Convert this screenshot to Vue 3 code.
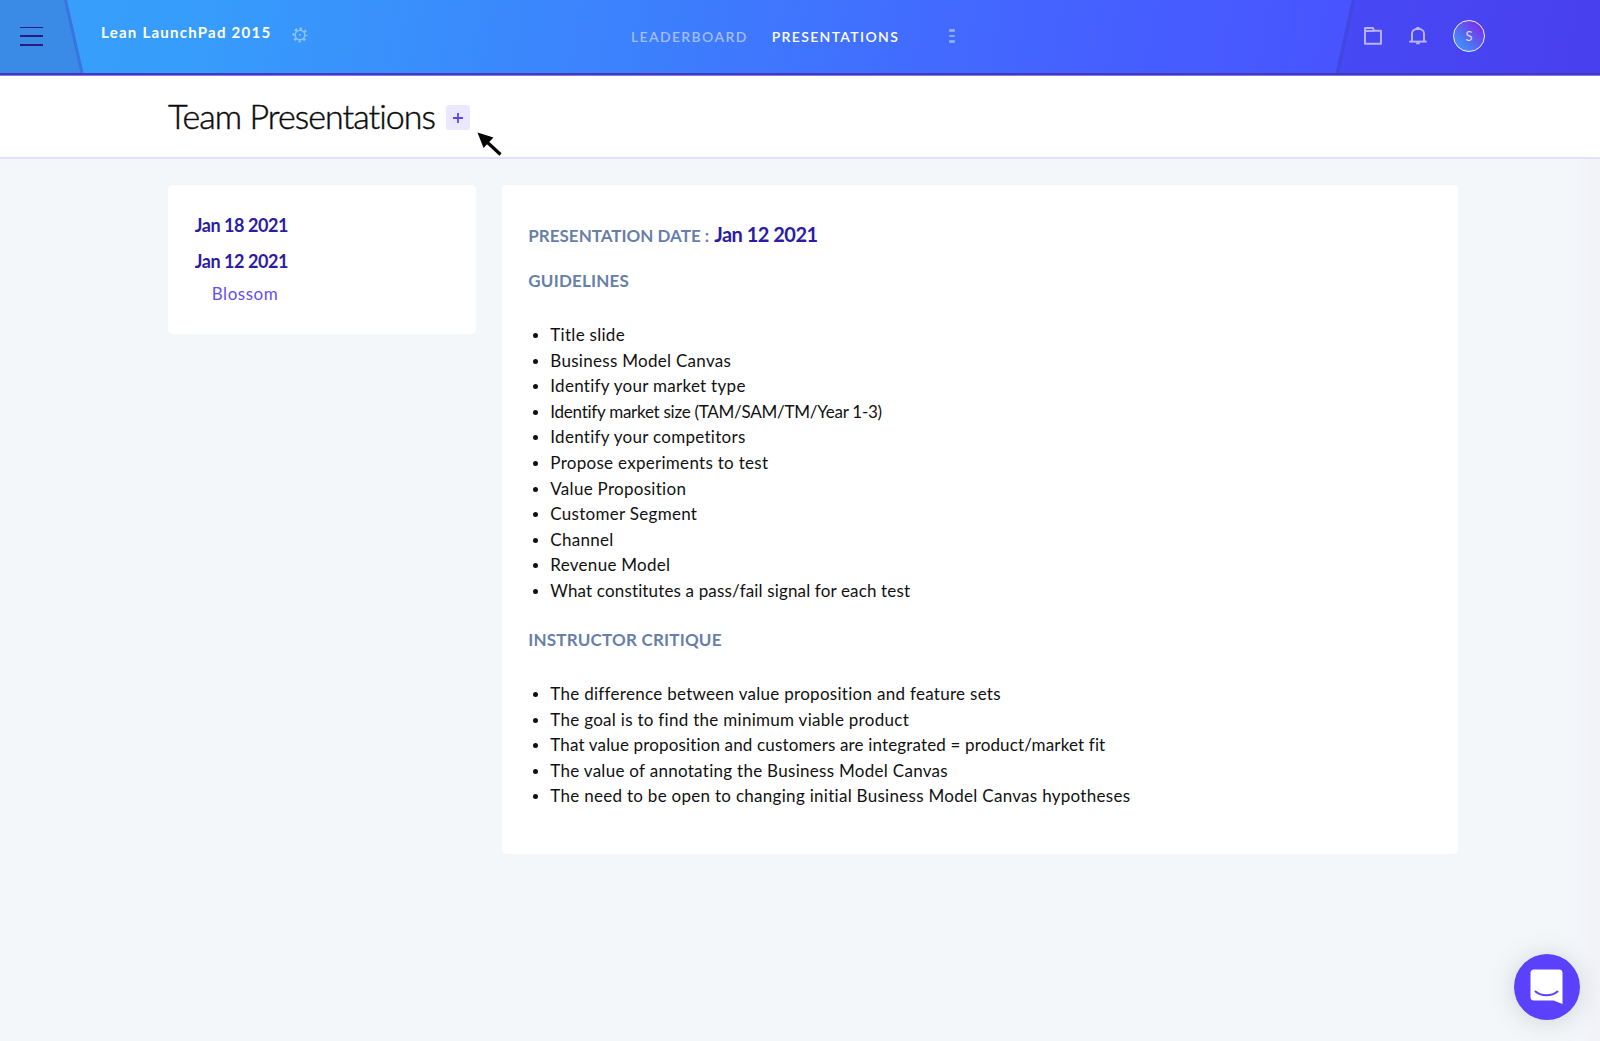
<template>
    <div class="page">
        <header class="topbar">
            <svg class="topbar__shapes" viewBox="0 0 1600 73" preserveAspectRatio="none">
                <polygon points="0,0 65,0 82,73 0,73" fill="#3c84de" fill-opacity="0.75" />
                <path d="M65.5 0L82 73" stroke="#3a74dd" stroke-width="3" />
                <polygon points="1354,0 1600,0 1600,73 1338,73" fill="#463ce8" fill-opacity="0.45" />
                <path d="M1353.5 0L1337.5 73" stroke="#4048e0" stroke-width="3.5" />
            </svg>
            <button class="topbar__menu" aria-label="Menu">
                <span class="topbar__line"></span>
                <span class="topbar__line"></span>
                <span class="topbar__line topbar__line--bold"></span>
            </button>
            <div class="topbar__course">
                <span class="topbar__name">Lean LaunchPad 2015</span>
                <svg class="topbar__gear" width="16" height="16" viewBox="0 0 16 16" fill="none">
                    <circle cx="8" cy="8" r="4.8" stroke="currentColor" stroke-width="1.5" />
                    <circle cx="8" cy="8" r="6.4" stroke="currentColor" stroke-width="2.2" stroke-dasharray="2.3 2.73" stroke-dashoffset="1.15" />
                    <circle cx="8" cy="8" r="0.9" fill="currentColor" />
                </svg>
            </div>
            <nav class="topbar__nav">
                <a v-for="item in navItems" :key="item.label" class="topbar__link"
                    :class="{ 'topbar__link--active': item.active }">{{ item.label }}</a>
                <span class="topbar__more"><i></i><i></i><i></i></span>
            </nav>
            <div class="topbar__actions">
                <svg width="18" height="18" viewBox="0 0 18 18" fill="none" stroke="currentColor" stroke-width="1.9" stroke-linejoin="round">
                    <path d="M1 16.8V1h8l1 2.8h7v13z" />
                    <path d="M1 4h9" />
                </svg>
                <svg class="topbar__bell" width="18" height="18" viewBox="0 0 18 18" fill="none" stroke="currentColor" stroke-width="1.9">
                    <path d="M3 14.4V6.6a4.6 4.6 0 0 1 4.6-4.6h2.8a4.6 4.6 0 0 1 4.6 4.6v7.8" />
                    <path d="M0.3 14.6h17.4" />
                    <path d="M7.4 1h3.2M7.2 16.2h3.6" />
                </svg>
                <span class="topbar__avatar">S</span>
            </div>
        </header>

        <section class="heading">
            <h1 class="heading__title">Team Presentations</h1>
            <button class="heading__add" aria-label="Add presentation">
                <svg width="10" height="10" viewBox="0 0 10 10" stroke="#5b45f5" stroke-width="1.8">
                    <path d="M5 0v10M0 5h10" />
                </svg>
            </button>
            <svg class="heading__pointer" width="26" height="26" viewBox="0 0 26 26">
                <path d="M10 10L23.5 22.5" stroke="#050505" stroke-width="3.2" />
                <path d="M0.5 0.5L16.5 5.5L6.5 16z" fill="#050505" />
            </svg>
        </section>

        <main class="content">
            <aside class="card dates">
                <div v-for="entry in dates" :key="entry.date" class="dates__group">
                    <div class="dates__day">{{ entry.date }}</div>
                    <a v-for="team in entry.teams" :key="team" class="dates__team">{{ team }}</a>
                </div>
            </aside>

            <article class="card detail">
                <h2 class="detail__label detail__label--date">
                    <span class="detail__caption">PRESENTATION DATE :</span>
                    <span class="detail__date">Jan 12 2021</span>
                </h2>
                <template v-for="section in sections" :key="section.title">
                    <h2 class="detail__label">{{ section.title }}</h2>
                    <ul class="detail__list">
                        <li v-for="line in section.lines" :key="line" :class="lineClass(line)">{{ line }}</li>
                    </ul>
                </template>
            </article>
        </main>

        <button class="chat" aria-label="Open chat">
            <svg width="34" height="36" viewBox="0 0 34 36">
                <path d="M4 0.5h25a3.5 3.5 0 0 1 3.5 3.5v31L23.5 31.5H4A3.5 3.5 0 0 1 0.5 28V4A3.5 3.5 0 0 1 4 0.5z" fill="#fff" />
                <path d="M5.5 22.5c6 5 16 5 22 0" fill="none" stroke="#5b41fb" stroke-width="2" stroke-linecap="round" />
            </svg>
        </button>
    </div>
</template>

<script setup>
const navItems = [
    { label: 'LEADERBOARD', active: false },
    { label: 'PRESENTATIONS', active: true }
];

const dates = [
    { date: 'Jan 18 2021', teams: [] },
    { date: 'Jan 12 2021', teams: ['Blossom'] }
];

const sections = [
    {
        title: 'GUIDELINES',
        lines: [
            'Title slide',
            'Business Model Canvas',
            'Identify your market type',
            'Identify market size (TAM/SAM/TM/Year 1-3)',
            'Identify your competitors',
            'Propose experiments to test',
            'Value Proposition',
            'Customer Segment',
            'Channel',
            'Revenue Model',
            'What constitutes a pass/fail signal for each test'
        ]
    },
    {
        title: 'INSTRUCTOR CRITIQUE',
        lines: [
            'The difference between value proposition and feature sets',
            'The goal is to find the minimum viable product',
            'That value proposition and customers are integrated = product/market fit',
            'The value of annotating the Business Model Canvas',
            'The need to be open to changing initial Business Model Canvas hypotheses'
        ]
    }
];

const lineClass = (line) => {
    if (line.includes('(')) return 'detail__line--tight';
    if (line.includes('/')) return 'detail__line--snug';
    return '';
};
</script>

<style>
body {
    margin: 0;
    background-color: #f3f7fa;
}
</style>

<style scoped>
.page {
    position: relative;
    min-height: 1041px;
    overflow: hidden;
    box-sizing: border-box;
    background: linear-gradient(90deg, #f3f7fa 98.6%, #f1f3f8 99.4%);
    color: #111;
    font-family: Lato, "Liberation Sans", sans-serif;
}

button {
    padding: 0;
    border: none;
    cursor: pointer;
}

.topbar {
    position: relative;
    display: grid;
    grid-template-columns: 101px 530px 1fr 236px;
    height: 75px;
    box-sizing: border-box;
    border-bottom: 2px solid #4338c6;
    background: linear-gradient(100deg, #379ffb 0%, #379cfb 13%, #3c80fd 40%, #4464ff 64%, #4854ff 84%, #4a42f2 100%);
}

.topbar__shapes {
    position: absolute;
    inset: 0;
    width: 100%;
    height: 73px;
}

.topbar__menu,
.topbar__course,
.topbar__nav,
.topbar__actions {
    position: relative;
}

.topbar__menu {
    display: flex;
    flex-direction: column;
    gap: 7px;
    align-self: start;
    width: 23px;
    margin: 26.5px 0 0 20px;
    background: none;
}

.topbar__line {
    height: 1.5px;
    background-color: #271c82;
}

.topbar__line--bold {
    height: 2.5px;
}

.topbar__course {
    display: flex;
    align-items: flex-start;
}

.topbar__name {
    width: 191px;
    margin-top: 22px;
    color: #fff;
    font-size: 15px;
    font-weight: 700;
    line-height: 20px;
    letter-spacing: 1.25px;
    white-space: nowrap;
}

.topbar__gear {
    margin-top: 27px;
    color: #8cc4fd;
}

.topbar__nav {
    display: flex;
    align-items: center;
    height: 72px;
}

.topbar__link {
    margin-right: 24px;
    color: #a3bdfd;
    font-size: 14px;
    font-weight: 600;
    letter-spacing: 1.35px;
    white-space: nowrap;
}

.topbar__link--active {
    color: #fff;
}

.topbar__more {
    display: flex;
    flex-direction: column;
    gap: 3px;
    margin-left: 26px;
}

.topbar__more i {
    width: 6px;
    height: 2.6px;
    border-radius: 1px;
    background-color: #8ba9fd;
}

.topbar__actions {
    display: flex;
    align-items: center;
    height: 72px;
    color: #b9b5fa;
}

.topbar__bell {
    margin-left: 27px;
}

.topbar__avatar {
    width: 30px;
    height: 30px;
    margin-left: 26px;
    border: 1.5px solid #f3eeff;
    border-radius: 50%;
    background: linear-gradient(45deg, #3c96fb 12%, #7a2de8 88%);
    color: #dcd8ff;
    font-size: 13px;
    line-height: 31px;
    text-align: center;
}

.heading {
    display: flex;
    align-items: flex-start;
    height: 84px;
    padding-left: 168px;
    box-sizing: border-box;
    border-top: 1px solid #857dda;
    border-bottom: 2px solid #e2e1fb;
    background-color: #fff;
}

.heading__title {
    width: 278px;
    margin: 19px 0 0;
    color: #0b0b0b;
    font-size: 34px;
    font-weight: 300;
    line-height: 42px;
    letter-spacing: -0.95px;
    white-space: nowrap;
    -webkit-text-stroke: 0.45px #0b0b0b;
}

.heading__add {
    display: flex;
    align-items: center;
    justify-content: center;
    width: 24px;
    height: 25px;
    margin-top: 29px;
    border-radius: 3px;
    background-color: #ebe8fe;
}

.heading__pointer {
    margin: 56px 0 0 7px;
}

.content {
    display: grid;
    grid-template-columns: 307.5px 956px;
    gap: 26.5px;
    align-items: start;
    padding: 26px 0 0 168.3px;
}

.card {
    box-sizing: border-box;
    border-radius: 5px;
    background-color: #fff;
}

.dates {
    height: 149px;
    padding: 23px 26.5px;
}

.dates__day {
    color: #2b1ca5;
    font-size: 18px;
    font-weight: 700;
    line-height: 35.5px;
    letter-spacing: -0.45px;
}

.dates__team {
    display: block;
    margin-left: 17px;
    color: #6350f0;
    font-size: 17px;
    line-height: 29px;
    letter-spacing: 0.5px;
}

.detail {
    height: 669px;
    padding: 31px 26px;
}

.detail__label {
    margin: 0;
    color: #687fa9;
    font-size: 17px;
    font-weight: 700;
    line-height: 36px;
    letter-spacing: 0.2px;
    white-space: nowrap;
}

.detail__label--date {
    display: flex;
    align-items: baseline;
    gap: 5px;
    margin-bottom: 9px;
    letter-spacing: 0;
}

.detail__date {
    color: #2b1ca5;
    font-size: 20px;
    letter-spacing: -0.5px;
}

.detail__list {
    margin: 23px 0 18.5px;
    padding-left: 22px;
    font-size: 17px;
    line-height: 25.6px;
    letter-spacing: 0.29px;
    white-space: nowrap;
}

.detail__list li::marker {
    font-size: 15px;
}

.detail__line--snug {
    letter-spacing: 0.15px;
}

.detail__line--tight {
    letter-spacing: -0.26px;
}

.chat {
    position: absolute;
    right: 20px;
    bottom: 21px;
    display: flex;
    align-items: center;
    justify-content: center;
    width: 66px;
    height: 66px;
    border-radius: 50%;
    background-color: #5b41fb;
    box-shadow: 0 2px 28px rgba(0, 0, 0, 0.14);
}
</style>
